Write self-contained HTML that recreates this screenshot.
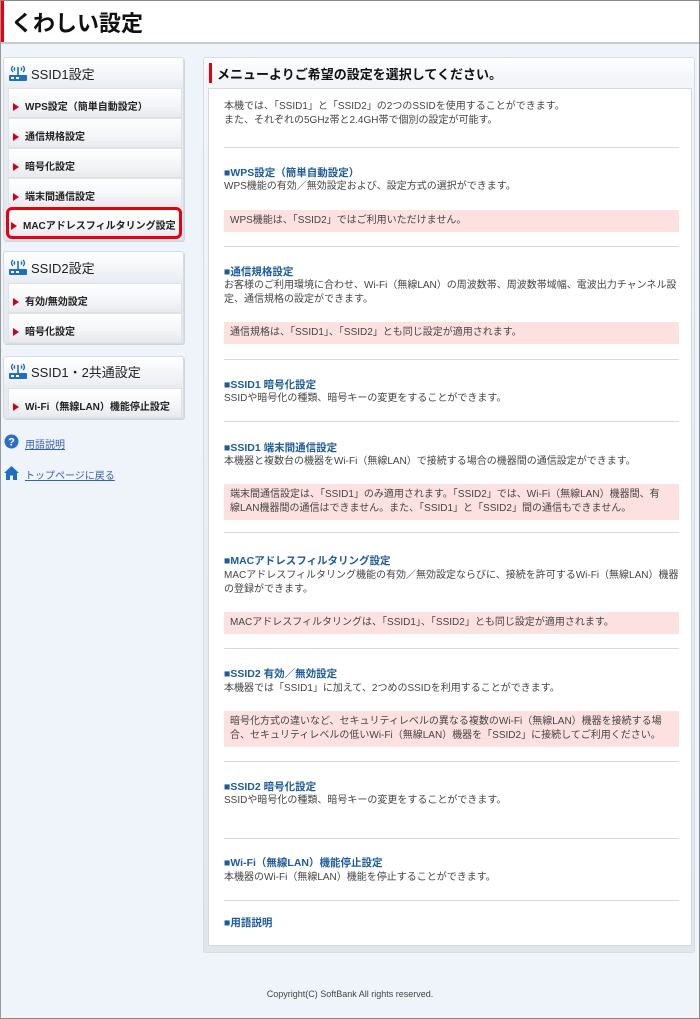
<!DOCTYPE html>
<html><head><meta charset="utf-8"><style>
*{margin:0;padding:0;box-sizing:border-box}
body{width:700px;height:1019px;overflow:hidden;background:#eff4fa;font-family:"Liberation Sans","Noto Sans CJK JP",sans-serif;position:relative;color:#333}
.frame{position:absolute;left:0;top:0;width:700px;height:1019px;border:1px solid #888;border-left-color:#999;pointer-events:none}
.hdr{position:absolute;left:0;top:0;width:700px;height:44px;background:#fff;border-bottom:2px solid #c8ccd2}
.hdr .bar{position:absolute;left:1px;top:1px;width:3px;height:41px;background:#e60012}
.hdr h1{position:absolute;left:11px;top:6px;font-size:22px;font-weight:bold;color:#111;letter-spacing:0px}
.box{position:absolute;left:3px;width:181px;background:linear-gradient(#fff,#e9edf2 30px,#e3e8ee);border:1px solid #d6dce3;border-radius:3px;box-shadow:1px 1px 0 #cfd6de}
.box .t{position:absolute;left:27px;font-size:13px;color:#222}
.ic{position:absolute;left:4px;width:20px;height:18px}
.it{position:absolute;left:4px;width:174px;height:30px;background:linear-gradient(#fff,#f4f5f7 60%,#e8eaed);border:1px solid #dfe2e6;font-size:10px;font-weight:bold;color:#222;padding:9px 0 0 4px;white-space:nowrap}
.it:before{content:"";display:inline-block;width:0;height:0;border-left:6px solid #d0001b;border-top:4.5px solid transparent;border-bottom:4.5px solid transparent;margin-right:6px;vertical-align:-1px}
.sel{border:3px solid #e60012;border-radius:6px;padding:7px 0 0 2px}
.lk{position:absolute;left:25px;font-size:10px;color:#3a5fa8;text-decoration:underline}
.rp{position:absolute;left:203px;top:57px;width:492px;height:896px;background:linear-gradient(#fff,#f3f5f8 20px,#e0e6ec);border:1px solid #d6dce3;border-radius:3px}
.rp .bar{position:absolute;left:5px;top:5px;width:3px;height:20px;background:#e60012}
.rp .ttl{position:absolute;left:13px;top:6px;font-size:13px;font-weight:bold;color:#111}
.in{position:absolute;left:208px;top:88px;width:484px;height:858px;background:#fff;border:1px solid #d3d8de}
.c{position:absolute;left:224px;font-size:10px;color:#444;line-height:14px;white-space:nowrap}
.h{position:absolute;left:224px;font-size:10.5px;font-weight:bold;color:#1f5b9b;white-space:nowrap}
.p{position:absolute;left:224px;width:455px;background:#fde1e1;font-size:10px;color:#444;line-height:14px;padding:4px 6px}
.hr{position:absolute;left:224px;width:455px;height:1px;background:#d8d8d8}
.cp{position:absolute;left:0;width:700px;top:989px;text-align:center;font-size:9px;color:#444}
</style></head><body>
<div class="hdr"><div class="bar"></div><h1>くわしい設定</h1></div>

<svg width="0" height="0" style="position:absolute"><defs><symbol id="w" viewBox="0 0 20 18"><path d="M5 2 Q2 5 5 8 M7 3.5 Q5.5 5 7 6.5 M15 2 Q18 5 15 8 M13 3.5 Q14.5 5 13 6.5" stroke="#1f6fc0" stroke-width="1.4" fill="none"/><rect x="9.2" y="3" width="1.6" height="8" fill="#1f6fc0"/><rect x="1" y="11" width="18" height="6" rx="1" fill="#1f6fc0"/><rect x="3" y="13" width="3" height="2" fill="#fff"/><rect x="8" y="13" width="3" height="2" fill="#fff"/></symbol></defs></svg>

<div class="box" style="top:57px;height:184px">
<svg class="ic" style="top:6px"><use href="#w"/></svg><div class="t" style="top:6px">SSID1設定</div>
<div class="it" style="top:30px">WPS設定（簡単自動設定）</div>
<div class="it" style="top:60px">通信規格設定</div>
<div class="it" style="top:90px">暗号化設定</div>
<div class="it" style="top:120px">端末間通信設定</div>
<div class="it sel" style="top:149px;left:2px;width:176px;height:32px">MACアドレスフィルタリング設定</div>
</div>
<div class="box" style="top:251px;height:93px">
<svg class="ic" style="top:6px"><use href="#w"/></svg><div class="t" style="top:6px">SSID2設定</div>
<div class="it" style="top:31px">有効/無効設定</div>
<div class="it" style="top:61px">暗号化設定</div>
</div>
<div class="box" style="top:356px;height:63px">
<svg class="ic" style="top:5px"><use href="#w"/></svg><div class="t" style="top:5px">SSID1・2共通設定</div>
<div class="it" style="top:31px">Wi-Fi（無線LAN）機能停止設定</div>
</div>
<svg style="position:absolute;left:4px;top:434px" width="15" height="15"><circle cx="7.5" cy="7.5" r="7" fill="#2a6fc4"/><text x="7.5" y="11.5" font-size="11" font-weight="bold" fill="#fff" text-anchor="middle" font-family="Liberation Sans">?</text></svg>
<div class="lk" style="top:436px">用語説明</div>
<svg style="position:absolute;left:3px;top:465px" width="17" height="16"><path d="M8.5 1 L1 8 L3 8 L3 15 L7 15 L7 10.5 L10 10.5 L10 15 L14 15 L14 8 L16 8 Z" fill="#1f6fc0"/></svg>
<div class="lk" style="top:467px">トップページに戻る</div>

<div class="rp"><div class="bar"></div><div class="ttl">メニューよりご希望の設定を選択してください。</div></div>
<div class="in"></div>
<div class="c" style="top:100px">本機では、「SSID1」と「SSID2」の2つのSSIDを使用することができます。<br>また、それぞれの5GHz帯と2.4GH帯で個別の設定が可能す。</div>
<div class="hr" style="top:147px"></div>
<div class="h" style="top:165px">■WPS設定（簡単自動設定）</div>
<div class="c" style="top:180px">WPS機能の有効／無効設定および、設定方式の選択ができます。</div>
<div class="p" style="top:210px;height:22px">WPS機能は、「SSID2」ではご利用いただけません。</div>
<div class="hr" style="top:246px"></div>
<div class="h" style="top:264px">■通信規格設定</div>
<div class="c" style="top:279px">お客様のご利用環境に合わせ、Wi-Fi（無線LAN）の周波数帯、周波数帯域幅、電波出力チャンネル設<br>定、通信規格の設定ができます。</div>
<div class="p" style="top:322px;height:22px">通信規格は、「SSID1」、「SSID2」とも同じ設定が適用されます。</div>
<div class="hr" style="top:359px"></div>
<div class="h" style="top:377px">■SSID1 暗号化設定</div>
<div class="c" style="top:392px">SSIDや暗号化の種類、暗号キーの変更をすることができます。</div>
<div class="hr" style="top:421px"></div>
<div class="h" style="top:440px">■SSID1 端末間通信設定</div>
<div class="c" style="top:455px">本機器と複数台の機器をWi-Fi（無線LAN）で接続する場合の機器間の通信設定ができます。</div>
<div class="p" style="top:484px;height:36px">端末間通信設定は、「SSID1」のみ適用されます。「SSID2」では、Wi-Fi（無線LAN）機器間、有<br>線LAN機器間の通信はできません。また、「SSID1」と「SSID2」間の通信もできません。</div>
<div class="hr" style="top:532px"></div>
<div class="h" style="top:553px">■MACアドレスフィルタリング設定</div>
<div class="c" style="top:569px">MACアドレスフィルタリング機能の有効／無効設定ならびに、接続を許可するWi-Fi（無線LAN）機器<br>の登録ができます。</div>
<div class="p" style="top:612px;height:22px">MACアドレスフィルタリングは、「SSID1」、「SSID2」とも同じ設定が適用されます。</div>
<div class="hr" style="top:648px"></div>
<div class="h" style="top:666px">■SSID2 有効／無効設定</div>
<div class="c" style="top:682px">本機器では「SSID1」に加えて、2つめのSSIDを利用することができます。</div>
<div class="p" style="top:711px;height:36px">暗号化方式の違いなど、セキュリティレベルの異なる複数のWi-Fi（無線LAN）機器を接続する場<br>合、セキュリティレベルの低いWi-Fi（無線LAN）機器を「SSID2」に接続してご利用ください。</div>
<div class="hr" style="top:761px"></div>
<div class="h" style="top:779px">■SSID2 暗号化設定</div>
<div class="c" style="top:794px">SSIDや暗号化の種類、暗号キーの変更をすることができます。</div>
<div class="hr" style="top:838px"></div>
<div class="h" style="top:855px">■Wi-Fi（無線LAN）機能停止設定</div>
<div class="c" style="top:871px">本機器のWi-Fi（無線LAN）機能を停止することができます。</div>
<div class="hr" style="top:900px"></div>
<div class="h" style="top:915px">■用語説明</div>
<div class="cp">Copyright(C) SoftBank All rights reserved.</div>
<div class="frame"></div>
</body></html>
